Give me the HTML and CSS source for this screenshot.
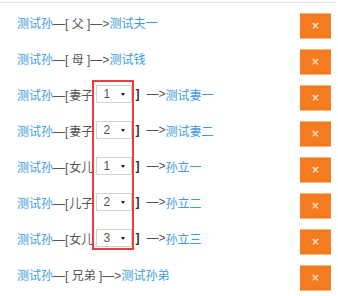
FILE: index.html
```html
<!DOCTYPE html>
<html lang="zh-CN">
<head>
    <meta charset="UTF-8">
    <meta name="viewport" content="width=device-width, initial-scale=1.0">
    <title>关系列表</title>
    <link rel="stylesheet" href="styles.css">
</head>
<body>

    <div class="relations">
        <div class="row">
            <div class="line"><a class="name" href="#">测试孙</a><span class="rel">—[ 父 ]—&gt;</span><a class="name" href="#">测试夫一</a></div>
            <button class="del">×</button>
        </div>
        <div class="row">
            <div class="line"><a class="name" href="#">测试孙</a><span class="rel">—[ 母 ]—&gt;</span><a class="name" href="#">测试钱</a></div>
            <button class="del">×</button>
        </div>
        <div class="row">
            <div class="line"><a class="name" href="#">测试孙</a><span class="rel">—[<span class="kin">妻子</span></span><span class="pick">1</span><span class="close">]</span><span class="arrow">—&gt;</span><a class="name" href="#">测试妻一</a></div>
            <button class="del">×</button>
        </div>
        <div class="row">
            <div class="line"><a class="name" href="#">测试孙</a><span class="rel">—[<span class="kin">妻子</span></span><span class="pick">2</span><span class="close">]</span><span class="arrow">—&gt;</span><a class="name" href="#">测试妻二</a></div>
            <button class="del">×</button>
        </div>
        <div class="row">
            <div class="line"><a class="name" href="#">测试孙</a><span class="rel">—[<span class="kin">女儿</span></span><span class="pick">1</span><span class="close">]</span><span class="arrow">—&gt;</span><a class="name" href="#">孙立一</a></div>
            <button class="del">×</button>
        </div>
        <div class="row">
            <div class="line"><a class="name" href="#">测试孙</a><span class="rel">—[<span class="kin">儿子</span></span><span class="pick">2</span><span class="close">]</span><span class="arrow">—&gt;</span><a class="name" href="#">孙立二</a></div>
            <button class="del">×</button>
        </div>
        <div class="row">
            <div class="line"><a class="name" href="#">测试孙</a><span class="rel">—[<span class="kin">女儿</span></span><span class="pick">3</span><span class="close">]</span><span class="arrow">—&gt;</span><a class="name" href="#">孙立三</a></div>
            <button class="del">×</button>
        </div>
        <div class="row">
            <div class="line"><a class="name" href="#">测试孙</a><span class="rel">—[ 兄弟 ]—&gt;</span><a class="name" href="#">测试孙弟</a></div>
            <button class="del">×</button>
        </div>

        <div class="mark"></div>
    </div>

</body>
</html>
```

FILE: styles.css
```css
body {
    margin: 0;
    font-family: "Liberation Sans", "Noto Sans CJK SC", sans-serif;
    font-size: 12px;
    color: #555;
    background-color: #ffffff;
}
.relations {
    position: relative;
    width: 336px;
    margin-top: 2px;
    border-top: 1px solid #e3e3e3;
}
.row {
    height: 36px;
    display: flex;
    justify-content: space-between;
    align-items: flex-start;
}
.line {
    display: flex;
    align-items: center;
    height: 18px;
    margin-top: 10px;
    padding-left: 17px;
    white-space: pre;
}
.name {
    color: #3d9be0;
    text-decoration: none;
}
.kin {
    margin-left: 1px;
}
.pick {
    position: relative;
    box-sizing: border-box;
    width: 36px;
    height: 18px;
    line-height: 16px;
    padding-left: 6px;
    margin-left: 3px;
    border: 1px solid #d2d2d2;
    background-color: #fff;
    color: #555;
}
.pick::after {
    content: "";
    position: absolute;
    right: 6px;
    top: 7px;
    border-left: 2px solid transparent;
    border-right: 2px solid transparent;
    border-top: 3px solid #222;
}
.close {
    margin-left: 3px;
    color: #333;
    font-weight: bold;
}
.arrow {
    margin-left: 7px;
}
.del {
    width: 31px;
    height: 26px;
    margin-top: 10px;
    margin-right: 5px;
    padding: 0;
    border: none;
    border-top: 1px solid #f9b27a;
    border-bottom: 1px solid #f9b27a;
    background-color: #f47b20;
    color: #fde3d6;
    font-family: "DejaVu Sans", sans-serif;
    font-size: 10px;
    font-weight: bold;
    line-height: 24px;
    cursor: pointer;
}
/* highlight round the order selects */
.mark {
    position: absolute;
    left: 92px;
    top: 77px;
    width: 42px;
    height: 170px;
    box-sizing: border-box;
    border: 2px solid #ee3b3b;
}
```
